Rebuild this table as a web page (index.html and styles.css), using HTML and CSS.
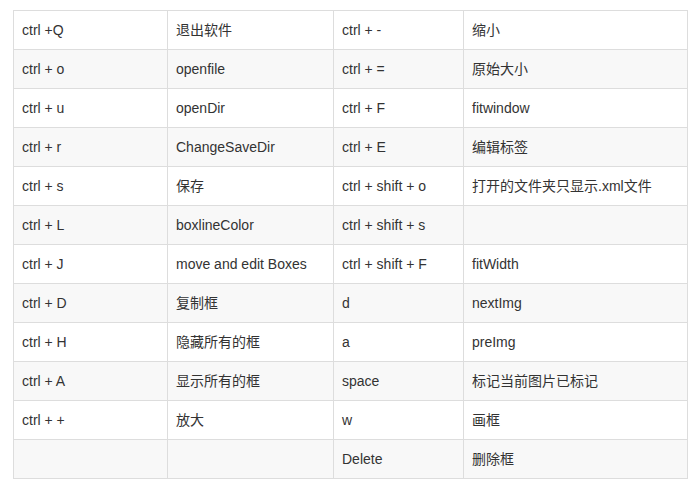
FILE: index.html
```html
<!DOCTYPE html>
<html lang="zh">
<head>
<meta charset="utf-8">
<link rel="stylesheet" href="styles.css">
</head>
<body>
<div class="wrap">
<table class="keys">
<colgroup>
<col class="c1"><col class="c2"><col class="c3"><col class="c4">
</colgroup>
<tbody>
<tr><td>ctrl +Q</td><td>退出软件</td><td>ctrl + -</td><td>缩小</td></tr>
<tr><td>ctrl + o</td><td>openfile</td><td>ctrl + =</td><td>原始大小</td></tr>
<tr><td>ctrl + u</td><td>openDir</td><td>ctrl + F</td><td>fitwindow</td></tr>
<tr><td>ctrl + r</td><td>ChangeSaveDir</td><td>ctrl + E</td><td>编辑标签</td></tr>
<tr><td>ctrl + s</td><td>保存</td><td>ctrl + shift + o</td><td>打开的文件夹只显示.xml文件</td></tr>
<tr><td>ctrl + L</td><td>boxlineColor</td><td>ctrl + shift + s</td><td></td></tr>
<tr><td>ctrl + J</td><td>move and edit Boxes</td><td>ctrl + shift + F</td><td>fitWidth</td></tr>
<tr><td>ctrl + D</td><td>复制框</td><td>d</td><td>nextImg</td></tr>
<tr><td>ctrl + H</td><td>隐藏所有的框</td><td>a</td><td>preImg</td></tr>
<tr><td>ctrl + A</td><td>显示所有的框</td><td>space</td><td>标记当前图片已标记</td></tr>
<tr><td>ctrl + +</td><td>放大</td><td>w</td><td>画框</td></tr>
<tr><td></td><td></td><td>Delete</td><td>删除框</td></tr>
</tbody>
</table>
</div>
</body>
</html>
```

FILE: styles.css
```css
html, body {
  margin: 0;
  padding: 0;
  background: #fff;
}
.wrap {
  padding: 10px 0 0 13px;
}
.keys {
  border-collapse: collapse;
  table-layout: fixed;
  width: 674px;
  font-family: "Liberation Sans", Arial, "Noto Sans CJK SC", sans-serif;
  font-size: 14px;
  color: #333;
}
.c1 { width: 154px; }
.c2 { width: 166px; }
.c3 { width: 130px; }
.c4 { width: 224px; }
.keys td {
  border: 1px solid #dddddd;
  padding: 10px 8px;
  line-height: 18px;
  height: 18px;
  white-space: nowrap;
  overflow: hidden;
}
.keys tr:nth-child(even) td {
  background: #f8f8f8;
}
```
